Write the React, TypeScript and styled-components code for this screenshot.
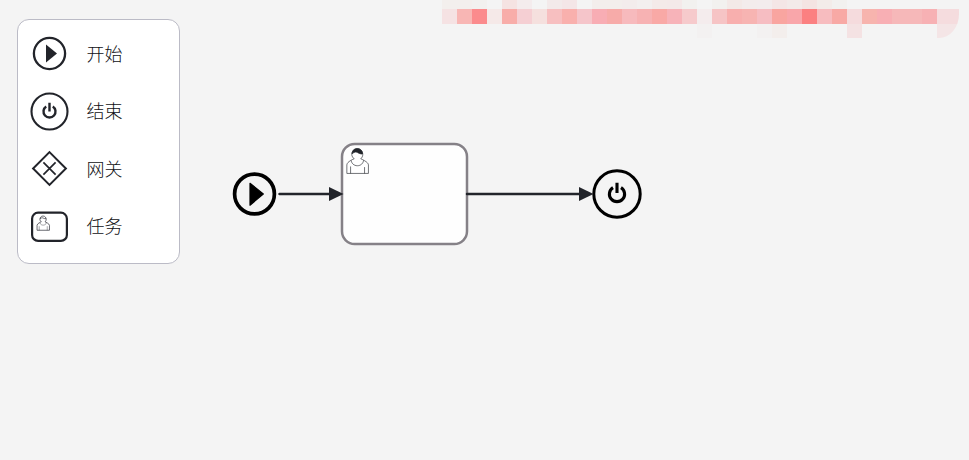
import React from 'react';
import styled, { createGlobalStyle } from 'styled-components';

const GlobalStyle = createGlobalStyle`
  * { box-sizing: border-box; }
  html, body { margin: 0; background: #f4f4f4; overflow: hidden; }
`;

const Canvas = styled.main`
  position: relative;
  width: 969px;
  height: 460px;
  padding: 19px 17px;
  background: #f4f4f4;
  font-family: 'Noto Sans CJK SC', sans-serif;
`;

const Palette = styled.aside`
  width: 163px;
  height: 245px;
  padding: 5px 0 0 12px;
  border: 1px solid #bbbbc6;
  border-radius: 12px;
  background: #fff;
`;

const PaletteItem = styled.div`
  display: flex;
  align-items: center;
  gap: 17.5px;
  height: 57.5px;
  color: #101014;
`;

const PaletteIcon = styled.svg`
  display: block;
  flex: none;
  width: 39px;
  height: 39px;
  color: #22242a;
`;

const Label = styled.span`
  padding-bottom: 2px;
  font-size: 18px;
  font-weight: 300;
  line-height: 26px;
`;

const Node = styled.svg<{ $x: number; $y: number }>`
  position: absolute;
  left: ${(p) => p.$x}px;
  top: ${(p) => p.$y}px;
  overflow: visible;
  color: #000;
`;

const Mosaic = styled.div`
  position: absolute;
  left: 442px;
  top: 0;
  width: 517px;
  display: grid;
  grid-template-columns: repeat(35, 15px);
  grid-template-rows: 9px 15px 14px;
  overflow: hidden;
  border-radius: 0 0 20px 0 / 0 0 24px 0;
`;

const Tile = styled.i<{ $c: string }>`
  background: ${(p) => p.$c};
`;

const BG = '#f4f4f4';

const topRow = [
  '#f3efed', '#f3efed', '#f2f1ef', BG, '#f5e3e2', '#f4eced', BG, '#f3eaea', '#f4e6e7', BG,
  '#f3eeec', '#f3eeec', '#f3ecec', '#f3efef', '#f4eae9', '#f4e9e9', '#f2f1ef', BG, '#f2f1ef', '#f3e9e7',
  '#f3ecec', '#f3eced', '#f4e6e6', '#f3eae9', '#f4e4e2', '#f3ece9', '#f2f1ef', BG, BG, BG,
  BG, BG, BG, BG, BG,
];

const middleRow = [
  '#f5e2e3', '#f8b6b4', '#fb8b8d', '#f5e9e8', '#f8ada9', '#f5cfd3', '#f5e0de', '#f7bfc0', '#f9b0ad', '#f5c5ca',
  '#f8adb4', '#f7aba9', '#f7babd', '#f7b2b3', '#f9a9a6', '#f7b3b9', '#f6cacc', '#f4eced', '#f6c4c5', '#f8afae',
  '#f7b4b2', '#f6bdc2', '#f9a5a0', '#f9a6aa', '#fb8081', '#f7bcbf', '#f8a9a5', '#f5dbdd', '#f7b4ae', '#f8afb4',
  '#f6b8b9', '#f6b8b9', '#f7b1b4', '#f5dcde', '#f5dcde',
];

const bottomRow = middleRow.map((_, i) =>
  i === 27 ? '#f4e2e3' : i >= 33 ? '#f4e5e6' : i === 22 ? '#f3eeec' : i === 17 || i === 21 ? '#f3f1f1' : BG,
);

const Person = ({ transform, line = 0.5 }: { transform: string; line?: number }) => (
  <g transform={transform} fill="#fff" stroke="#22242a" strokeWidth={line}>
    <path d="m15,12 c.909,-.845 1.594,-2.049 1.594,-3.385 0,-2.554 -1.805,-4.622 -4.357,-4.622 -2.552,0 -4.288,2.068 -4.288,4.622 0,1.348 .974,2.562 1.896,3.405 -.529,.187 -5.669,2.097 -5.794,4.756 v6.718 h17 v-6.718 c0,-2.298 -5.528,-4.595 -6.051,-4.776 z m-8,6 l0,5.5 m11,0 l0,-5" />
    <path d="m17.162,13.009 c0,2.447 -2.158,4.431 -4.821,4.431 -2.665,0 -4.822,-1.981 -4.822,-4.431" />
    <path
      fill="#22242a"
      d="m8.1,8.2 c0,0 2.251,-2.358 4.274,-1.177 2.024,1.181 4.221,1.537 4.124,.965 -.098,-.57 -.117,-3.791 -4.191,-4.136 -3.572,.001 -4.208,3.229 -4.207,4.348 z"
    />
  </g>
);

const SmallPerson = () => (
  <g transform="translate(4.1 6.1) scale(.73)" fill="none" stroke="#33353d" strokeWidth="1">
    <path d="m15,12 c.909,-.845 1.594,-2.049 1.594,-3.385 0,-2.554 -1.805,-4.622 -4.357,-4.622 -2.552,0 -4.288,2.068 -4.288,4.622 0,1.348 .974,2.562 1.896,3.405 -.529,.187 -5.669,2.097 -5.794,4.756 v6.718 h17 v-6.718 c0,-2.298 -5.528,-4.595 -6.051,-4.776" />
    <path strokeWidth=".6" d="M7 18v5.5M18 18v5.5M8 13.5c1 4 7.800 4 8.800 0" />
    <path d="M8.100 7.800c1.800-1.500 3-1.700 4.300-1 1.600.8 3 1.100 4.100.9" />
  </g>
);

const icons = {
  start: (
    <>
      <circle cx="19.5" cy="19.5" r="15.6" fill="none" stroke="currentColor" strokeWidth="2.3" />
      <path d="M16 10.6V28.4L27 19.5Z" fill="currentColor" />
    </>
  ),
  end: (
    <g fill="none" stroke="currentColor">
      <circle cx="19.5" cy="19.5" r="18" strokeWidth="2.1" />
      <path d="M16.2 14.5A6 6 0 1 0 22.8 14.5M19.5 10.8V19.4" strokeWidth="2.4" />
    </g>
  ),
  gateway: (
    <g fill="none" stroke="currentColor">
      <path d="M19.5 3.1L35.9 19.5L19.5 35.9L3.1 19.5Z" strokeWidth="2" />
      <path d="M13.4 13.4L25.6 25.6M25.6 13.4L13.4 25.6" strokeWidth="1.7" />
    </g>
  ),
  task: (
    <>
      <rect x="2.1" y="5.7" width="34.8" height="28.2" rx="6" fill="none" stroke="currentColor" strokeWidth="2.2" />
      <SmallPerson />
    </>
  ),
};

const items: { icon: keyof typeof icons; label: string }[] = [
  { icon: 'start', label: '开始' },
  { icon: 'end', label: '结束' },
  { icon: 'gateway', label: '网关' },
  { icon: 'task', label: '任务' },
];

const Edge = ({ x, length, lead = 0 }: { x: number; length: number; lead?: number }) => (
  <Node $x={x} $y={186} width={length} height={16}>
    <path d={`M${lead} 8H${length - 13}`} stroke="#22242a" strokeWidth="2.5" strokeLinecap="round" />
    <path d={`M${length - 14.5} 1V15L${length} 8Z`} fill="#22242a" />
  </Node>
);

export default function App() {
  return (
    <>
      <GlobalStyle />
      <Canvas>
        <Palette>
          {items.map(({ icon, label }) => (
            <PaletteItem key={icon}>
              <PaletteIcon viewBox="0 0 39 39">{icons[icon]}</PaletteIcon>
              <Label>{label}</Label>
            </PaletteItem>
          ))}
        </Palette>

        <Mosaic>
          {[...topRow, ...middleRow, ...bottomRow].map((color, i) => (
            <Tile key={i} $c={color} />
          ))}
        </Mosaic>

        <Node $x={232} $y={172} width={45} height={45}>
          <circle cx="22.5" cy="22" r="19.9" fill="none" stroke="currentColor" strokeWidth="3.7" />
          <path d="M18 11.3V33.2L31.3 22Z" fill="currentColor" stroke="currentColor" strokeWidth="1.2" strokeLinejoin="round" />
        </Node>
        <Node $x={340} $y={142} width={130} height={105}>
          <rect x="2" y="2" width="125" height="100" rx="12.7" fill="#fefefe" stroke="#858187" strokeWidth="2.5" />
          <Person transform="translate(1.7 1.6) scale(1.27)" />
        </Node>
        <Node $x={592} $y={169} width={50} height={50}>
          <g fill="none" stroke="currentColor">
            <circle cx="25" cy="25" r="23.2" strokeWidth="3" />
            <path d="M21 18.6A7.6 7.6 0 1 0 29 18.6M25 13.8V24" strokeWidth="3.1" />
          </g>
        </Node>
        <Edge x={278} length={65.5} lead={1.5} />
        <Edge x={466} length={127.5} lead={1} />
      </Canvas>
    </>
  );
}
